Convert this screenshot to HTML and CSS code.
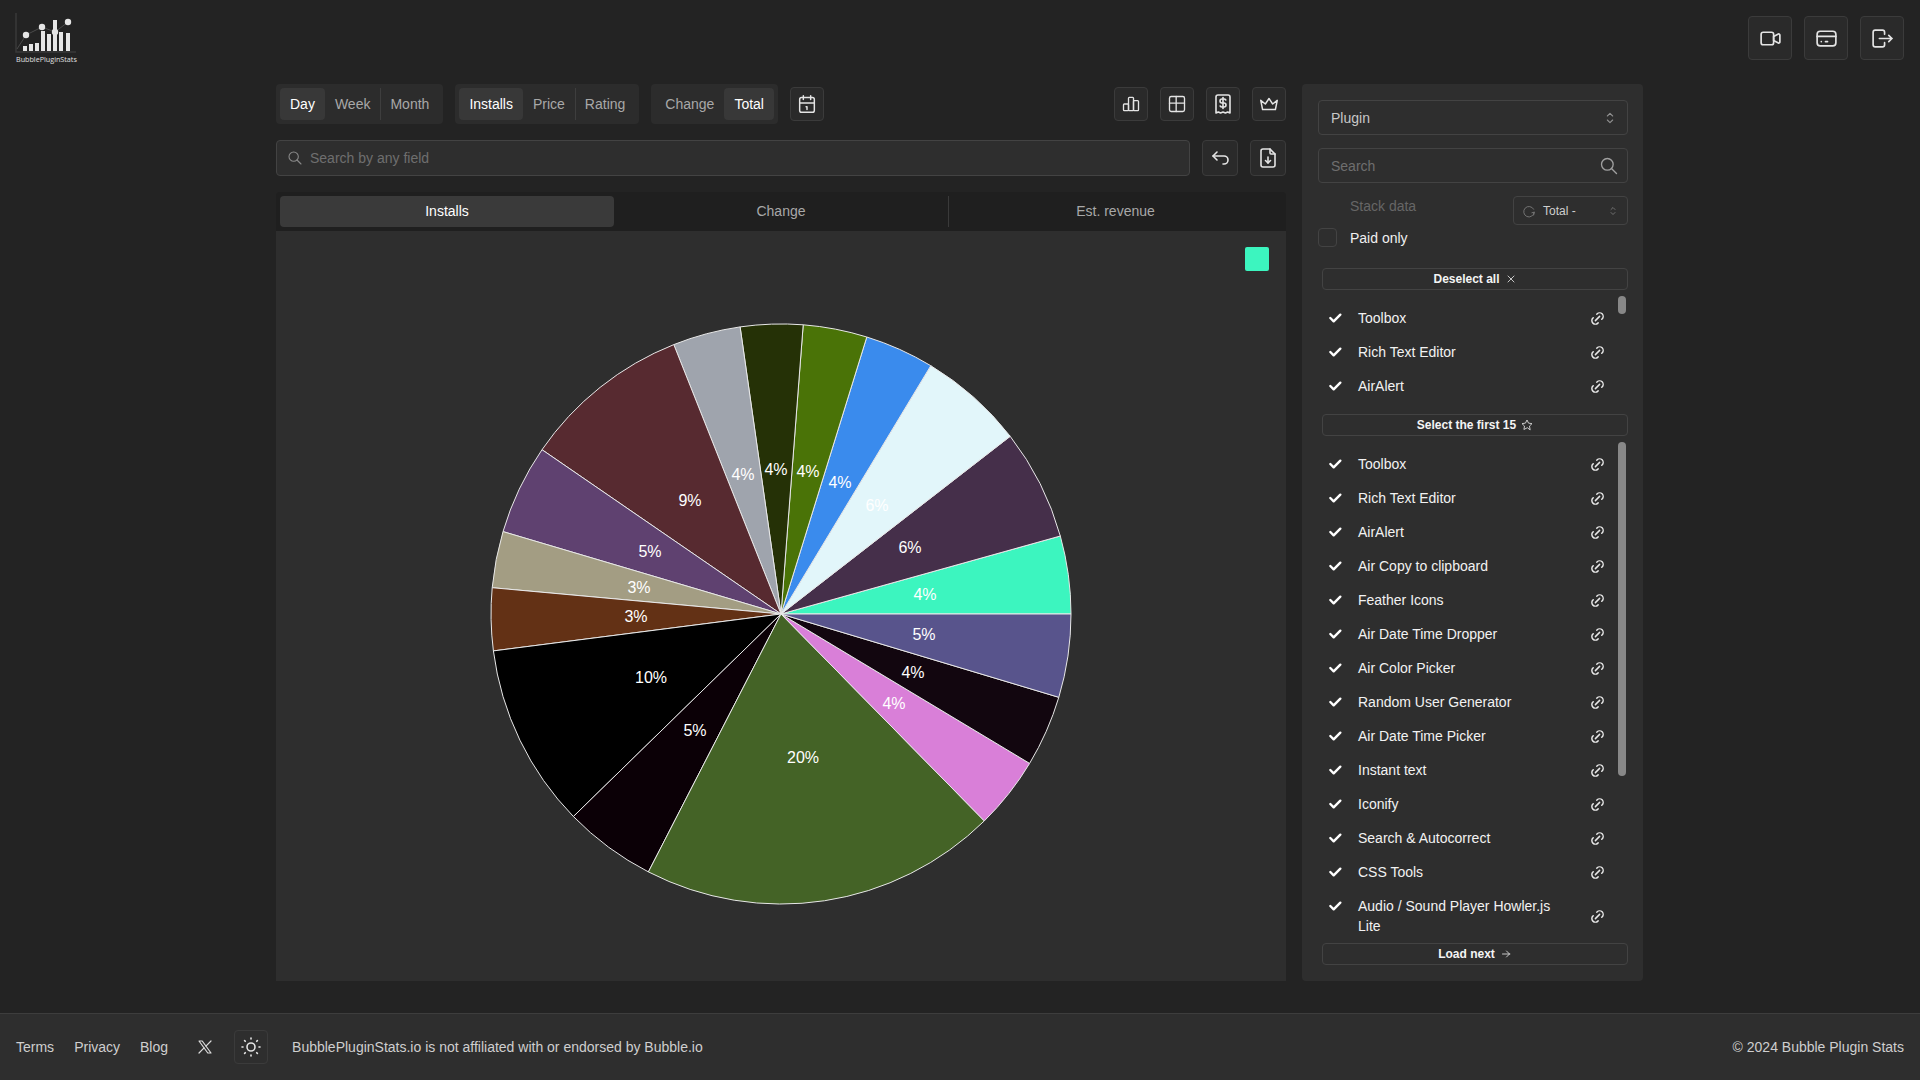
FILE: index.html
```html
<!DOCTYPE html>
<html lang="en">
<head>
    <meta charset="UTF-8">
    <meta name="viewport" content="width=device-width, initial-scale=1.0">
    <title>Bubble Plugin Stats</title>
    <link rel="stylesheet" href="styles.css">
</head>
<body>
    <svg class="sprite" xmlns="http://www.w3.org/2000/svg">
        <symbol id="i-video" viewBox="0 0 24 24"><path d="M15 10l4.553 -2.276a1 1 0 0 1 1.447 .894v6.764a1 1 0 0 1 -1.447 .894l-4.553 -2.276v-4z"/><path d="M3 8a2 2 0 0 1 2 -2h8a2 2 0 0 1 2 2v8a2 2 0 0 1 -2 2h-8a2 2 0 0 1 -2 -2z"/></symbol>
        <symbol id="i-card" viewBox="0 0 24 24"><path d="M3 8a3 3 0 0 1 3 -3h12a3 3 0 0 1 3 3v8a3 3 0 0 1 -3 3h-12a3 3 0 0 1 -3 -3z"/><path d="M3 10h18"/><path d="M7 15h.01"/><path d="M11 15h2"/></symbol>
        <symbol id="i-logout" viewBox="0 0 24 24"><path d="M14 8v-2a2 2 0 0 0 -2 -2h-7a2 2 0 0 0 -2 2v12a2 2 0 0 0 2 2h7a2 2 0 0 0 2 -2v-2"/><path d="M9 12h12l-3 -3"/><path d="M18 15l3 -3"/></symbol>
        <symbol id="i-calendar" viewBox="0 0 24 24"><path d="M4 7a2 2 0 0 1 2 -2h12a2 2 0 0 1 2 2v12a2 2 0 0 1 -2 2h-12a2 2 0 0 1 -2 -2z"/><path d="M16 3v4"/><path d="M8 3v4"/><path d="M4 11h16"/><path d="M11 15h1v3"/></symbol>
        <symbol id="i-bars" viewBox="0 0 24 24"><path d="M3 13a1 1 0 0 1 1 -1h4a1 1 0 0 1 1 1v6a1 1 0 0 1 -1 1h-4a1 1 0 0 1 -1 -1z"/><path d="M15 9a1 1 0 0 1 1 -1h4a1 1 0 0 1 1 1v10a1 1 0 0 1 -1 1h-4a1 1 0 0 1 -1 -1z"/><path d="M9 5a1 1 0 0 1 1 -1h4a1 1 0 0 1 1 1v14a1 1 0 0 1 -1 1h-4a1 1 0 0 1 -1 -1z"/></symbol>
        <symbol id="i-table" viewBox="0 0 24 24"><path d="M3 5a2 2 0 0 1 2 -2h14a2 2 0 0 1 2 2v14a2 2 0 0 1 -2 2h-14a2 2 0 0 1 -2 -2z"/><path d="M3 11h18"/><path d="M11 3v18"/></symbol>
        <symbol id="i-receipt" viewBox="0 0 24 24"><path d="M5 21v-16a2 2 0 0 1 2 -2h10a2 2 0 0 1 2 2v16l-2.300 -1l-2.300 1l-2.400 -1l-2.400 1l-2.300 -1z"/><path d="M14.800 8a2 2 0 0 0 -1.800 -1h-2a2 2 0 0 0 0 4h2a2 2 0 0 1 0 4h-2a2 2 0 0 1 -1.800 -1"/><path d="M12 5.500v11"/></symbol>
        <symbol id="i-crown" viewBox="0 0 24 24"><path d="M12 6l4 6l5 -4l-2 10h-14l-2 -10l5 4z"/></symbol>
        <symbol id="i-back" viewBox="0 0 24 24"><path d="M9 14l-4 -4l4 -4"/><path d="M5 10h11a4 4 0 1 1 0 8h-1"/></symbol>
        <symbol id="i-file" viewBox="0 0 24 24"><path d="M14 3v4a1 1 0 0 0 1 1h4"/><path d="M17 21h-10a2 2 0 0 1 -2 -2v-14a2 2 0 0 1 2 -2h7l5 5v11a2 2 0 0 1 -2 2z"/><path d="M12 17v-6"/><path d="M9.500 14.500l2.500 2.500l2.500 -2.500"/></symbol>
        <symbol id="i-search" viewBox="0 0 24 24"><path d="M3 10a7 7 0 1 0 14 0a7 7 0 1 0 -14 0"/><path d="M21 21l-6 -6"/></symbol>
        <symbol id="i-selector" viewBox="0 0 24 24"><path d="M8 9l4 -4l4 4"/><path d="M16 15l-4 4l-4 -4"/></symbol>
        <symbol id="i-link" viewBox="0 0 24 24"><path d="M9 15l6 -6"/><path d="M11 6l.463 -.536a5 5 0 0 1 7.071 7.072l-.534 .464"/><path d="M13 18l-.397 .534a5.068 5.068 0 0 1 -7.127 0a4.972 4.972 0 0 1 0 -7.071l.524 -.463"/></symbol>
        <symbol id="i-check" viewBox="0 0 24 24"><path d="M5 12l5 5l10 -10"/></symbol>
        <symbol id="i-x" viewBox="0 0 24 24"><path d="M18 6l-12 12"/><path d="M6 6l12 12"/></symbol>
        <symbol id="i-star" viewBox="0 0 24 24"><path d="M12 17.750l-6.172 3.245l1.179 -6.873l-5 -4.867l6.900 -1l3.086 -6.253l3.086 6.253l6.900 1l-5 4.867l1.179 6.873z"/></symbol>
        <symbol id="i-arrow" viewBox="0 0 24 24"><path d="M5 12h14"/><path d="M13 18l6 -6"/><path d="M13 6l6 6"/></symbol>
        <symbol id="i-brand-x" viewBox="0 0 24 24"><path d="M4 4l11.733 16h4.267l-11.733 -16z"/><path d="M4 20l6.768 -6.768m2.460 -2.460l6.772 -6.772"/></symbol>
        <symbol id="i-sun" viewBox="0 0 24 24"><path d="M8 12a4 4 0 1 0 8 0a4 4 0 1 0 -8 0"/><path d="M3 12h1"/><path d="M12 3v1"/><path d="M20 12h1"/><path d="M12 20v1"/><path d="M5.600 5.600l.7 .7"/><path d="M18.400 5.600l-.7 .7"/><path d="M17.700 17.700l.7 .7"/><path d="M6.300 17.700l-.7 .7"/></symbol>
        <symbol id="i-loader" viewBox="0 0 24 24"><path d="M20 9a9 9 0 1 0 1 5"/><path d="M20 19l1 -5l-4 1"/></symbol>
    </svg>

    <header class="topbar">
        <a class="logo" href="#">
            <svg class="logo-mark" viewBox="0 0 62 40">
                <path class="logo-axis" d="M1 0v39h60"/>
                <path class="logo-trend" d="M2 36L11 22L27 14L40 19L53 9"/>
                <g class="logo-bars">
                    <rect x="8" y="33" width="4" height="5"/>
                    <rect x="14" y="31" width="4" height="7"/>
                    <rect x="20" y="30" width="4" height="8"/>
                    <rect x="26" y="18" width="4" height="20"/>
                    <rect x="32" y="21" width="4" height="17"/>
                    <rect x="38" y="7" width="4" height="31"/>
                    <rect x="44" y="19" width="4" height="19"/>
                    <rect x="51" y="20" width="4" height="18"/>
                    <circle cx="11" cy="22" r="3.200"/>
                    <circle cx="27" cy="14" r="3.200"/>
                    <circle cx="40" cy="19" r="3.200"/>
                    <circle cx="53" cy="9" r="3.200"/>
                </g>
            </svg>
            <span class="logo-text">BubblePluginStats</span>
        </a>
        <div class="topbar-actions">
            <button class="icon-btn icon-btn-lg"><svg class="icon"><use href="#i-video"/></svg></button>
            <button class="icon-btn icon-btn-lg"><svg class="icon"><use href="#i-card"/></svg></button>
            <button class="icon-btn icon-btn-lg"><svg class="icon"><use href="#i-logout"/></svg></button>
        </div>
    </header>

    <main class="layout">
        <section class="chart-col">
            <div class="toolbar">
                <div class="segment">
                    <span class="seg-item active">Day</span>
                    <span class="seg-item">Week</span>
                    <span class="seg-item sep">Month</span>
                </div>
                <div class="segment">
                    <span class="seg-item active">Installs</span>
                    <span class="seg-item">Price</span>
                    <span class="seg-item sep">Rating</span>
                </div>
                <div class="segment">
                    <span class="seg-item">Change</span>
                    <span class="seg-item active">Total</span>
                </div>
                <button class="icon-btn"><svg class="icon icon-cal"><use href="#i-calendar"/></svg></button>
                <div class="toolbar-right">
                    <button class="icon-btn"><svg class="icon"><use href="#i-bars"/></svg></button>
                    <button class="icon-btn"><svg class="icon"><use href="#i-table"/></svg></button>
                    <button class="icon-btn"><svg class="icon icon-receipt"><use href="#i-receipt"/></svg></button>
                    <button class="icon-btn"><svg class="icon icon-crown"><use href="#i-crown"/></svg></button>
                </div>
            </div>

            <div class="search-row">
                <div class="field search-main">
                    <svg class="icon icon-sm"><use href="#i-search"/></svg>
                    <span class="placeholder">Search by any field</span>
                </div>
                <button class="icon-btn icon-btn-tall"><svg class="icon"><use href="#i-back"/></svg></button>
                <button class="icon-btn icon-btn-tall"><svg class="icon"><use href="#i-file"/></svg></button>
            </div>

            <div class="tabs">
                <span class="tab active">Installs</span>
                <span class="tab">Change</span>
                <span class="tab sep">Est. revenue</span>
            </div>

            <div class="chart-area">
                <span class="legend-box"></span>
                <svg class="pie" viewBox="-300 -300 600 600">
                    <g class="slices">
                        <path fill="#3cf5bf" d="M0 0L290 0A290 290 0 0 0 279.300 -78Z"/>
                        <path fill="#452f4a" d="M0 0L279.300 -78A290 290 0 0 0 229.200 -177.700Z"/>
                        <path fill="#e2f6fa" d="M0 0L229.200 -177.700A290 290 0 0 0 149.800 -248.300Z"/>
                        <path fill="#3a8bed" d="M0 0L149.800 -248.300A290 290 0 0 0 85.800 -277Z"/>
                        <path fill="#4a7307" d="M0 0L85.800 -277A290 290 0 0 0 22.200 -289.200Z"/>
                        <path fill="#253106" d="M0 0L22.200 -289.200A290 290 0 0 0 -40.900 -287.100Z"/>
                        <path fill="#9fa4ad" d="M0 0L-40.900 -287.100A290 290 0 0 0 -107.200 -269.400Z"/>
                        <path fill="#572a30" d="M0 0L-107.200 -269.400A290 290 0 0 0 -239 -164.300Z"/>
                        <path fill="#5f4170" d="M0 0L-239 -164.300A290 290 0 0 0 -278 -82.400Z"/>
                        <path fill="#a39d83" d="M0 0L-278 -82.400A290 290 0 0 0 -288.800 -26.300Z"/>
                        <path fill="#633115" d="M0 0L-288.800 -26.300A290 290 0 0 0 -287.600 36.900Z"/>
                        <path fill="#000000" d="M0 0L-287.600 36.900A290 290 0 0 0 -207.600 202.500Z"/>
                        <path fill="#0b0006" d="M0 0L-207.600 202.500A290 290 0 0 0 -132.600 257.900Z"/>
                        <path fill="#446326" d="M0 0L-132.600 257.900A290 290 0 0 0 203.300 206.900Z"/>
                        <path fill="#d97fd8" d="M0 0L203.300 206.900A290 290 0 0 0 248.600 149.400Z"/>
                        <path fill="#12060f" d="M0 0L248.600 149.400A290 290 0 0 0 277.800 83.300Z"/>
                        <path fill="#58548c" d="M0 0L277.800 83.300A290 290 0 0 0 290 0Z"/>
                    </g>
                    <g class="pie-labels">
                        <text x="144" y="-20">4%</text>
                        <text x="143" y="20">5%</text>
                        <text x="132" y="58">4%</text>
                        <text x="113" y="89">4%</text>
                        <text x="22" y="143">20%</text>
                        <text x="-86" y="116">5%</text>
                        <text x="-130" y="63">10%</text>
                        <text x="-145" y="2">3%</text>
                        <text x="-142" y="-27">3%</text>
                        <text x="-131" y="-63">5%</text>
                        <text x="-91" y="-114">9%</text>
                        <text x="-38" y="-140">4%</text>
                        <text x="-5" y="-145">4%</text>
                        <text x="27" y="-143">4%</text>
                        <text x="59" y="-132">4%</text>
                        <text x="96" y="-109">6%</text>
                        <text x="129" y="-67">6%</text>
                    </g>
                </svg>
            </div>
        </section>

        <aside class="sidebar">
            <div class="field select-plugin">
                <span class="select-value">Plugin</span>
                <svg class="icon icon-xs"><use href="#i-selector"/></svg>
            </div>
            <div class="field search-side">
                <span class="placeholder">Search</span>
                <svg class="icon icon-search-lg"><use href="#i-search"/></svg>
            </div>
            <div class="stack-row">
                <span class="stack-label">Stack data</span>
                <div class="total-select">
                    <svg class="icon icon-loader"><use href="#i-loader"/></svg>
                    <span class="total-value">Total -</span>
                    <svg class="icon icon-tiny"><use href="#i-selector"/></svg>
                </div>
            </div>
            <label class="paid-row">
                <span class="checkbox"></span>
                <span>Paid only</span>
            </label>

            <button class="list-btn list-btn-first">Deselect all <svg class="icon icon-btn-glyph"><use href="#i-x"/></svg></button>
            <ul class="plugin-list list-selected">
                <li class="plugin-row"><svg class="icon icon-check"><use href="#i-check"/></svg><span class="plugin-name">Toolbox</span><svg class="icon icon-link"><use href="#i-link"/></svg></li>
                <li class="plugin-row"><svg class="icon icon-check"><use href="#i-check"/></svg><span class="plugin-name">Rich Text Editor</span><svg class="icon icon-link"><use href="#i-link"/></svg></li>
                <li class="plugin-row"><svg class="icon icon-check"><use href="#i-check"/></svg><span class="plugin-name">AirAlert</span><svg class="icon icon-link"><use href="#i-link"/></svg></li>
                <li class="scroll-thumb thumb-short"></li>
            </ul>

            <button class="list-btn">Select the first 15 <svg class="icon icon-btn-glyph"><use href="#i-star"/></svg></button>
            <ul class="plugin-list list-all">
                <li class="plugin-row"><svg class="icon icon-check"><use href="#i-check"/></svg><span class="plugin-name">Toolbox</span><svg class="icon icon-link"><use href="#i-link"/></svg></li>
                <li class="plugin-row"><svg class="icon icon-check"><use href="#i-check"/></svg><span class="plugin-name">Rich Text Editor</span><svg class="icon icon-link"><use href="#i-link"/></svg></li>
                <li class="plugin-row"><svg class="icon icon-check"><use href="#i-check"/></svg><span class="plugin-name">AirAlert</span><svg class="icon icon-link"><use href="#i-link"/></svg></li>
                <li class="plugin-row"><svg class="icon icon-check"><use href="#i-check"/></svg><span class="plugin-name">Air Copy to clipboard</span><svg class="icon icon-link"><use href="#i-link"/></svg></li>
                <li class="plugin-row"><svg class="icon icon-check"><use href="#i-check"/></svg><span class="plugin-name">Feather Icons</span><svg class="icon icon-link"><use href="#i-link"/></svg></li>
                <li class="plugin-row"><svg class="icon icon-check"><use href="#i-check"/></svg><span class="plugin-name">Air Date Time Dropper</span><svg class="icon icon-link"><use href="#i-link"/></svg></li>
                <li class="plugin-row"><svg class="icon icon-check"><use href="#i-check"/></svg><span class="plugin-name">Air Color Picker</span><svg class="icon icon-link"><use href="#i-link"/></svg></li>
                <li class="plugin-row"><svg class="icon icon-check"><use href="#i-check"/></svg><span class="plugin-name">Random User Generator</span><svg class="icon icon-link"><use href="#i-link"/></svg></li>
                <li class="plugin-row"><svg class="icon icon-check"><use href="#i-check"/></svg><span class="plugin-name">Air Date Time Picker</span><svg class="icon icon-link"><use href="#i-link"/></svg></li>
                <li class="plugin-row"><svg class="icon icon-check"><use href="#i-check"/></svg><span class="plugin-name">Instant text</span><svg class="icon icon-link"><use href="#i-link"/></svg></li>
                <li class="plugin-row"><svg class="icon icon-check"><use href="#i-check"/></svg><span class="plugin-name">Iconify</span><svg class="icon icon-link"><use href="#i-link"/></svg></li>
                <li class="plugin-row"><svg class="icon icon-check"><use href="#i-check"/></svg><span class="plugin-name">Search &amp; Autocorrect</span><svg class="icon icon-link"><use href="#i-link"/></svg></li>
                <li class="plugin-row"><svg class="icon icon-check"><use href="#i-check"/></svg><span class="plugin-name">CSS Tools</span><svg class="icon icon-link"><use href="#i-link"/></svg></li>
                <li class="plugin-row"><svg class="icon icon-check"><use href="#i-check"/></svg><span class="plugin-name">Audio / Sound Player Howler.js Lite</span><svg class="icon icon-link"><use href="#i-link"/></svg></li>
                <li class="scroll-thumb thumb-long"></li>
            </ul>
            <button class="list-btn">Load next <svg class="icon icon-btn-glyph"><use href="#i-arrow"/></svg></button>
        </aside>
    </main>

    <footer class="footer">
        <nav class="footer-nav">
            <a href="#">Terms</a>
            <a href="#">Privacy</a>
            <a href="#">Blog</a>
        </nav>
        <svg class="icon footer-x"><use href="#i-brand-x"/></svg>
        <button class="icon-btn theme-btn"><svg class="icon icon-sun"><use href="#i-sun"/></svg></button>
        <p class="disclaimer">BubblePluginStats.io is not affiliated with or endorsed by Bubble.io</p>
        <p class="copyright">© 2024 Bubble Plugin Stats</p>
    </footer>
</body>
</html>
```

FILE: styles.css
```css
* {
    box-sizing: border-box;
}
body {
    font-family: 'Liberation Sans', Arial, sans-serif;
    font-size: 14px;
    background-color: #232323;
    color: #fff;
    margin: 0;
    height: 100vh;
    display: flex;
    flex-direction: column;
    overflow: hidden;
}
.sprite {
    display: none;
}
.icon {
    width: 20px;
    height: 20px;
    fill: none;
    stroke: #e4e4e4;
    stroke-width: 1.6;
    stroke-linecap: round;
    stroke-linejoin: round;
    flex: none;
}
button {
    font-family: inherit;
    padding: 0;
    cursor: pointer;
}

/* top bar */
.topbar {
    height: 84px;
    flex: none;
    display: flex;
    justify-content: space-between;
    padding: 13px 16px 0 15px;
}
.logo {
    display: flex;
    flex-direction: column;
    width: 62px;
    text-decoration: none;
}
.logo-mark {
    width: 62px;
    height: 40px;
}
.logo-axis {
    fill: none;
    stroke: #3a3a3a;
    stroke-width: 1.5;
}
.logo-trend {
    fill: none;
    stroke: #4a4a4a;
    stroke-width: 1;
}
.logo-bars {
    fill: #e6e6e6;
}
.logo-text {
    font-family: 'Open Sans', sans-serif;
    font-size: 7.2px;
    line-height: 12px;
    color: #e0e0e0;
    white-space: nowrap;
    margin-left: 1px;
}
.topbar-actions {
    display: flex;
    gap: 12px;
    padding-top: 3px;
}
.icon-btn {
    width: 34px;
    height: 34px;
    display: flex;
    align-items: center;
    justify-content: center;
    background-color: #2a2a2a;
    border: 1px solid #3b3b3b;
    border-radius: 4px;
    flex: none;
}
.icon-btn-lg {
    width: 44px;
    height: 44px;
}
.icon-btn-lg .icon {
    width: 25px;
    height: 25px;
}
.icon-btn-tall {
    width: 36px;
    height: 36px;
}
.icon-btn-tall .icon,
.icon-receipt {
    width: 24px;
    height: 24px;
}
.icon-cal,
.icon-crown {
    width: 22px;
    height: 22px;
}

/* main layout */
.layout {
    flex: 1;
    min-height: 0;
    width: 1368px;
    margin: 0 auto;
    padding-bottom: 32px;
    display: flex;
    gap: 16px;
}
.chart-col {
    width: 1010px;
    display: flex;
    flex-direction: column;
}
.toolbar {
    height: 40px;
    margin-bottom: 16px;
    display: flex;
    align-items: center;
    gap: 12px;
}
.toolbar-right {
    margin-left: auto;
    display: flex;
    gap: 12px;
}
.segment {
    height: 40px;
    padding: 4px;
    display: flex;
    background-color: #2c2c2c;
    border-radius: 4px;
}
.seg-item {
    padding: 0 10px 1px;
    display: flex;
    align-items: center;
    color: #a8a8a8;
    border-radius: 4px;
}
.seg-item.active {
    background-color: #383838;
    color: #fff;
}
.seg-item.sep {
    border-left: 1px solid #3e3e3e;
    border-radius: 0;
    padding-left: 9px;
}
.search-row {
    height: 36px;
    margin-bottom: 16px;
    display: flex;
    gap: 12px;
}
.field {
    display: flex;
    align-items: center;
    background-color: #2e2e2e;
    border: 1px solid #434343;
    border-radius: 4px;
}
.search-main {
    flex: 1;
    padding: 0 10px;
    gap: 7px;
}
.placeholder {
    color: #6e6e6e;
}
.icon-sm {
    width: 16px;
    height: 16px;
    stroke: #8a8a8a;
}
.tabs {
    height: 39px;
    padding: 4px;
    display: grid;
    grid-template-columns: repeat(3, 1fr);
    background-color: #1f1f1f;
    border-radius: 4px 4px 0 0;
}
.tab {
    padding-bottom: 1px;
    display: flex;
    align-items: center;
    justify-content: center;
    color: #a8a8a8;
    border-radius: 4px;
}
.tab.active {
    background-color: #3a3a3a;
    color: #fff;
}
.tab.sep {
    border-left: 1px solid #3a3a3a;
    border-radius: 0;
}
.chart-area {
    flex: 1;
    position: relative;
    display: flex;
    justify-content: center;
    padding-top: 83px;
    background-color: #2e2e2e;
}
.legend-box {
    position: absolute;
    top: 16px;
    right: 17px;
    width: 24px;
    height: 24px;
    background-color: #3cf5bf;
    border-radius: 2px;
}
.pie {
    width: 600px;
    height: 600px;
}
.slices path {
    stroke: #e8e8e8;
    stroke-width: 1;
    stroke-linejoin: round;
}
.pie-labels text {
    fill: #fff;
    font-family: 'Liberation Sans', Arial, sans-serif;
    font-size: 16px;
    text-anchor: middle;
    dominant-baseline: central;
}

/* sidebar */
.sidebar {
    width: 341px;
    padding: 16px 15px 0 16px;
    display: flex;
    flex-direction: column;
    background-color: #2e2e2e;
    border-radius: 4px;
}
.select-plugin {
    height: 35px;
    padding: 0 12px;
    justify-content: space-between;
    margin-bottom: 13px;
}
.select-value {
    color: #c8c8c8;
}
.icon-xs {
    width: 16px;
    height: 16px;
    stroke: #909090;
    margin-right: -3px;
}
.search-side {
    height: 35px;
    padding: 0 8px 0 12px;
    justify-content: space-between;
    margin-bottom: 13px;
}
.icon-search-lg {
    width: 20px;
    height: 20px;
    stroke: #a0a0a0;
}
.stack-row {
    height: 29px;
    display: flex;
    justify-content: space-between;
}
.stack-label {
    margin-left: 32px;
    margin-top: 2px;
    color: #666;
}
.total-select {
    width: 115px;
    height: 29px;
    padding: 0 8px;
    display: flex;
    align-items: center;
    border: 1px solid #434343;
    border-radius: 4px;
    font-size: 12px;
    color: #cfcfcf;
}
.icon-loader {
    width: 14px;
    height: 14px;
    stroke: #777;
    margin-right: 7px;
}
.total-value {
    flex: 1;
}
.icon-tiny {
    width: 12px;
    height: 12px;
    stroke: #808080;
}
.paid-row {
    height: 19px;
    margin-top: 3px;
    display: flex;
    align-items: center;
    gap: 13px;
    color: #f0f0f0;
}
.checkbox {
    width: 19px;
    height: 19px;
    border: 1px solid #434343;
    border-radius: 4px;
}
.list-btn {
    height: 22px;
    margin-left: 4px;
    flex: none;
    display: flex;
    align-items: center;
    justify-content: center;
    gap: 5px;
    background: none;
    border: 1px solid #434343;
    border-radius: 4px;
    color: #f4f4f4;
    font-size: 12px;
    font-weight: bold;
}
.list-btn-first {
    margin-top: 21px;
}
.icon-btn-glyph {
    width: 12px;
    height: 12px;
    stroke: #d8d8d8;
    stroke-width: 1.8;
}
.plugin-list {
    list-style: none;
    margin: 0 0 0 4px;
    padding: 11px 0 0;
    position: relative;
}
.list-selected {
    height: 124px;
}
.list-all {
    height: 507px;
}
.plugin-row {
    min-height: 34px;
    padding: 7px 22px 7px 4px;
    display: flex;
    align-items: center;
    line-height: 20px;
    color: #f2f2f2;
}
.plugin-name {
    width: 216px;
    margin-left: 15px;
    margin-right: auto;
}
.icon-check {
    width: 16px;
    height: 16px;
    margin-left: 1px;
    margin-top: 2px;
    stroke: #fff;
    stroke-width: 3.6;
    align-self: flex-start;
}
.icon-link {
    width: 17px;
    height: 17px;
    stroke: #eaeaea;
    stroke-width: 2;
}
.scroll-thumb {
    position: absolute;
    right: 2px;
    width: 8px;
    border-radius: 4px;
    background-color: #888;
}
.thumb-short {
    top: 6px;
    height: 18px;
}
.thumb-long {
    top: 6px;
    height: 334px;
}

/* footer */
.footer {
    height: 67px;
    flex: none;
    display: flex;
    align-items: center;
    padding: 0 16px;
    background-color: #2e2e2e;
    border-top: 1px solid #3d3d3d;
    color: #cfcfcf;
}
.footer p {
    margin: 0;
}
.footer-nav {
    display: flex;
    gap: 20px;
}
.footer-nav a {
    color: #cfcfcf;
    text-decoration: none;
}
.footer-x {
    width: 18px;
    height: 18px;
    margin-left: 28px;
    stroke: #dcdcdc;
}
.theme-btn {
    margin-left: 20px;
    background: none;
}
.icon-sun {
    width: 24px;
    height: 24px;
}
.footer .disclaimer {
    margin-left: 24px;
}
.footer .copyright {
    margin-left: auto;
}
```
